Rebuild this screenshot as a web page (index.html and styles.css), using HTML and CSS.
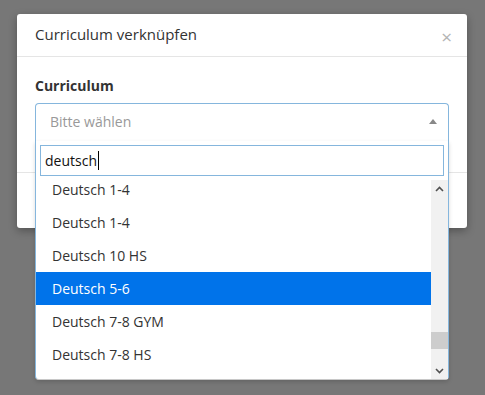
FILE: index.html
```html
<!DOCTYPE html>
<html lang="de">
<head>
  <meta charset="utf-8" />
  <title>Curriculum verknüpfen</title>
  <link rel="stylesheet" href="styles.css">
</head>
<body>
  <div class="modal">
    <div class="modal-header">
      <h4 class="modal-title">Curriculum verknüpfen</h4>
      <span class="close">&times;</span>
    </div>

    <div class="modal-body">
      <label class="field-label">Curriculum</label>
      <div class="select">
        <div class="select-box">
          <span class="placeholder">Bitte wählen</span>
          <span class="arrow"></span>
        </div>

        <!-- offenes Dropdown -->
        <div class="dropdown">
          <div class="search">
            <div class="search-input">deutsch<span class="caret"></span></div>
          </div>
          <div class="results">
            <div class="results-view">
              <ul class="options">
                <li>Deutsch 1-4</li>
                <li>Deutsch 1-4</li>
                <li>Deutsch 10 HS</li>
                <li class="highlighted">Deutsch 5-6</li>
                <li>Deutsch 7-8 GYM</li>
                <li>Deutsch 7-8 HS</li>
              </ul>
            </div>
            <div class="scrollbar">
              <div class="sb-btn">
                <svg width="9" height="6" viewBox="0 0 9 6"><path d="M1 5 L4.5 1.5 L8 5" fill="none" stroke="#505050" stroke-width="1.6"/></svg>
              </div>
              <div class="sb-track">
                <div class="sb-thumb"></div>
              </div>
              <div class="sb-btn">
                <svg width="9" height="6" viewBox="0 0 9 6"><path d="M1 1 L4.5 4.5 L8 1" fill="none" stroke="#505050" stroke-width="1.6"/></svg>
              </div>
            </div>
          </div>
        </div>
      </div>
    </div>

    <div class="modal-footer"></div>
  </div>
</body>
</html>
```

FILE: styles.css
```css
:root {
  --backdrop: #777777;
  --text: #333333;
  --border: #e5e5e5;
  --focus: #85b6dd;
  --highlight: #0073ea;
}

*, *::before, *::after {
  box-sizing: border-box;
  margin: 0;
  padding: 0;
}

html, body {
  height: 100%;
}

body {
  font-family: 'Open Sans', sans-serif;
  background: var(--backdrop);
  color: var(--text);
  padding: 14px 18px 0 17px;
}

/* Modal */
.modal {
  width: 450px;
  background: #fff;
  border-radius: 3px;
  box-shadow: 0 3px 9px rgba(0, 0, 0, 0.3);
}

.modal-header {
  height: 43px;
  padding: 0 18px;
  display: flex;
  align-items: center;
  justify-content: space-between;
  border-bottom: 1px solid var(--border);
}

.modal-title {
  font-size: 15px;
  font-weight: 400;
  color: #333;
  margin-top: -2px;
}

.close {
  font-size: 19px;
  color: #b4b4b4;
  line-height: 1;
  margin-top: 4px;
  margin-right: -3px;
}

.modal-body {
  padding: 19px 18px 31px;
}

.field-label {
  display: block;
  font-size: 14px;
  font-weight: 700;
  line-height: 20px;
  margin-bottom: 7px;
}

.modal-footer {
  height: 56px;
  border-top: 1px solid var(--border);
}

/* Select */
.select {
  position: relative;
}

.select-box {
  height: 38px;
  border: 1px solid var(--focus);
  border-bottom: none;
  border-radius: 4px 4px 0 0;
  display: flex;
  align-items: center;
  justify-content: space-between;
  padding: 0 11px 0 14px;
}

.placeholder {
  font-size: 14px;
  color: #999;
  margin-top: -3px;
}

.arrow {
  width: 0;
  height: 0;
  border-left: 4px solid transparent;
  border-right: 4px solid transparent;
  border-bottom: 5px solid #888;
  margin-top: -2px;
}

.dropdown {
  position: absolute;
  top: 38px;
  left: 0;
  right: 0;
  background: #fff;
  border: 1px solid var(--focus);
  border-top: none;
  border-bottom-color: #c8c8c8;
  border-radius: 0 0 4px 4px;
  box-shadow: 0 2px 4px rgba(0, 0, 0, 0.15);
  z-index: 10;
}

.search {
  padding: 4px 4px 4px;
}

.search-input {
  height: 31px;
  border: 1px solid var(--focus);
  font-size: 14px;
  line-height: 29px;
  padding-left: 4px;
  color: #111;
}

.caret {
  display: inline-block;
  width: 1px;
  height: 19px;
  background: #000;
  vertical-align: -4px;
  margin-left: 1px;
}

.results {
  display: flex;
  height: 199px;
}

.results-view {
  flex: 1;
  overflow: hidden;
}

.options {
  list-style: none;
  margin-top: -7px;
}

.options li {
  height: 33px;
  line-height: 33px;
  padding-left: 16px;
  font-size: 14px;
  color: #333;
}

.options li.highlighted {
  background: var(--highlight);
  color: #fff;
}

/* Scrollbar */
.scrollbar {
  width: 17px;
  background: #f1f1f1;
  display: flex;
  flex-direction: column;
}

.sb-btn {
  height: 17px;
  display: flex;
  align-items: center;
  justify-content: center;
}

.sb-track {
  flex: 1;
  padding-top: 135px;
}

.sb-thumb {
  height: 17px;
  background: #cdcdcd;
}
```
